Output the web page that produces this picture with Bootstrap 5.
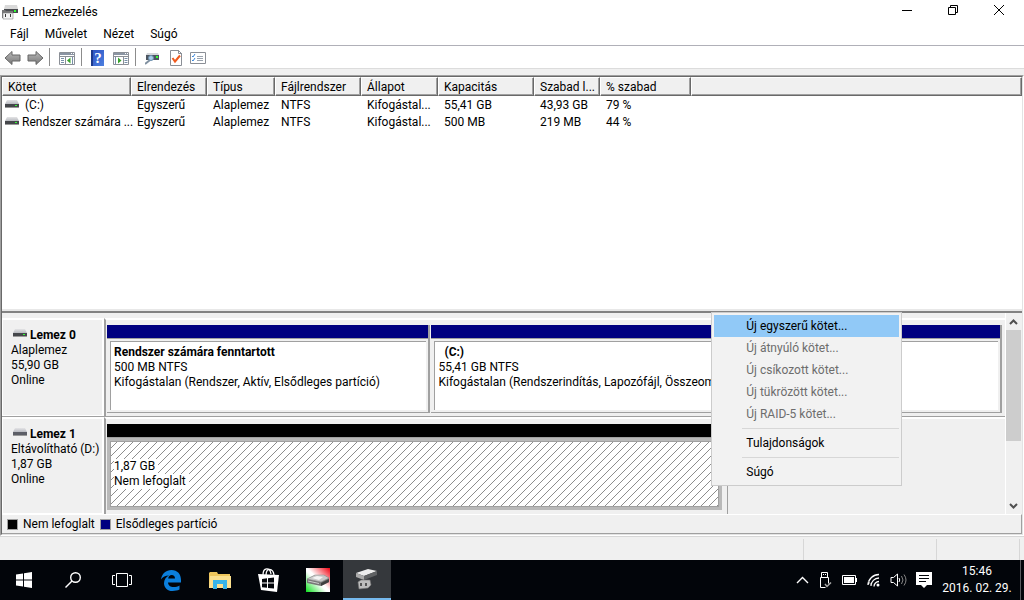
<!DOCTYPE html>
<html lang="hu">
<head>
<meta charset="utf-8">
<meta name="viewport" content="width=device-width, initial-scale=1">
<title>Lemezkezelés</title>
<link href="https://cdn.jsdelivr.net/npm/bootstrap@5.3.0/dist/css/bootstrap.min.css" rel="stylesheet">
<style>
:root{--face:#f0f0f0;--edge:#a0a0a0;--dark:#696969;--navy:#000080}
body{font-family:Roboto,"Open Sans",sans-serif;font-size:12px;line-height:15px;color:#000;background:var(--face);min-height:100vh;overflow:hidden}
button{border:0;background:none;padding:0;color:inherit;font:inherit}
svg{display:block;flex:none}
.titlebar{height:24px;background:#fff;padding:0 2px}
.win-btn{width:46px;height:20px;display:flex;align-items:center;justify-content:center}
.menubar{height:21px;background:#fff;padding-left:2px}
.menubar button{padding:0 8px;height:20px}
.toolstrip{height:24px;background:#fff;border-top:1px solid #b0b0b8;border-bottom:1px solid #dcdcdc;padding-left:4px;gap:5px}
.toolstrip .rule{width:1px;height:18px;background:#8c8c8c}
.toolstrip svg{margin-top:1px}
.workspace{margin-top:6px;border:1px solid var(--edge);border-right-color:#fff;border-bottom-color:#fff;position:relative}
.frame{border:1px solid var(--dark);border-right-color:#e3e3e3;border-bottom-color:#e3e3e3}
.volumes{background:#fff;min-height:160px}
.voltable{table-layout:fixed;width:100%;border-collapse:separate;border-spacing:0}
.voltable th{height:19px;font-weight:400;background:var(--face);border:1px solid;border-color:#fff var(--dark) var(--dark) #fff;padding:0 0 0 5px;line-height:16px;box-shadow:inset -1px -1px var(--edge)}
.voltable td{height:17px;padding:1px 0 0 6px;line-height:16px}
.voltable th,.voltable td{white-space:nowrap}
.voltable td:first-child{padding-left:3px}
.voltable td svg{display:inline-block;vertical-align:1px;margin-right:3px}
.splitter{height:5px;border-top:1px solid #fff;border-bottom:2px solid #828282;background:#e8e8e8}
.disks{height:201px}
.disk-list{padding-top:5px}
.disk-row{height:99px;border-bottom:1px solid var(--edge)}
.disk-row + .disk-row{height:97px;border-bottom:0}
.disk-label{width:102px;border:2px solid #fff;border-left-width:1px;border-bottom-width:1px;padding:8px 0 0 8px;white-space:nowrap;overflow:hidden}
.disk-name{font-weight:700}
.disk-name svg{display:inline-block;vertical-align:2px;margin-left:2px}
.lane{border-left:2px solid var(--edge);border-top:2px solid #fff;padding-top:5px}
.fixed-lane{padding-right:3px}
.strip{height:14px;border-bottom:1px solid var(--edge)}
.strip-primary{background:var(--navy)}
.strip-free{background:#000}
.part{margin-left:1px;border-right:2px solid var(--edge);border-bottom:1px solid var(--edge);height:88px;min-width:0}
.part-body{margin:2px 2px 3px 3px;border-left:1px solid var(--edge);border-top:1px solid var(--edge);background:#fff;padding:3px;height:69px;white-space:nowrap;overflow:hidden}
.part-body p,.free-body p,.disk-label p{margin:0}
.free-part{width:615px;max-width:69%;margin-left:1px}
.free-body{height:72px;border:3px solid #b9b9b9;outline:1px solid var(--edge);outline-offset:-4px;padding:18px 4px;background:#fff url("data:image/svg+xml,%3Csvg xmlns='http://www.w3.org/2000/svg' width='8' height='8'%3E%3Cpath d='M-1 1l2-2M0 8l8-8M7 9l2-2' stroke='%23808080' stroke-width='.9'/%3E%3C/svg%3E")}
.free-body span{background:#fff;padding-right:3px;display:inline-block;height:15px}
.free-edge{border-right:1px solid var(--edge);width:6px;margin-top:-5px}
.scroller{width:17px;background:#f0f0f0;border-left:1px solid #fff}
.scroller button{height:17px;width:15px;display:flex;align-items:center;justify-content:center}
.thumb{height:111px;width:15px;background:#cdcdcd}
.legend-bar{height:20px;border-top:1px solid #fff;border-bottom:1px solid var(--edge);border-right:1px solid var(--edge);padding:1px 0 0 5px;gap:5px}
.swatch{width:11px;height:11px;outline:1px solid var(--edge);outline-offset:-1px}
.popup{position:absolute;top:236px;left:69.5%;width:191px;background:#f2f2f2;border:1px solid #ccc;padding:2px;z-index:5}
.popup button{display:block;width:100%;height:22px;text-align:left;padding-left:32px}
.popup button:disabled{color:#6d6d6d}
.popup .chosen{background:#91c9f7}
.popup hr{margin:3px 0 3px 28px;border-top:1px solid #d7d7d7;opacity:1}
.status{height:24px;border-top:1px solid #d7d7d7}
.status div{border-right:1px solid #d7d7d7;margin-top:2px}
.taskbar{height:40px;background:#02050a;color:#fff}
.task{width:48px;height:40px;display:flex;align-items:center;justify-content:center}
.task.running{background:#35383c;border-bottom:2px solid #76b9ed}
.apps{gap:1px}
.tray{gap:9px;padding-right:2px}
.clock{width:86px;line-height:17px;padding-bottom:1px}
.corner{width:4px;border-left:1px solid #5a5c60}
</style>
</head>
<body class="d-flex flex-column">
<svg width="0" height="0" class="position-absolute" aria-hidden="true">
  <defs>
    <linearGradient id="metal" x2="0" y2="1"><stop stop-color="#e4e4e6"/><stop offset="1" stop-color="#b8bac0"/></linearGradient>
    <linearGradient id="arrowfill" x2="0" y2="1"><stop stop-color="#b9b9b9"/><stop offset="1" stop-color="#777"/></linearGradient>
    <linearGradient id="bluefill" x2="1" y2="1"><stop stop-color="#2a4fc0"/><stop offset="1" stop-color="#4d80e0"/></linearGradient>
    <symbol id="drive" viewBox="0 0 14 8"><path d="M2 0h10l2 4H0z" fill="url(#metal)"/><path d="M0 4h14v3H0z" fill="#45474b"/><path d="M0 7h14v1H0z" fill="#999"/><path d="M10 5h2v1h-2z" fill="#3f3"/></symbol>
    <symbol id="drive-off" viewBox="0 0 14 8"><path d="M2 0h10l2 4H0z" fill="url(#metal)"/><path d="M0 4h14v3H0z" fill="#5c5e66"/><path d="M0 7h14v1H0z" fill="#999"/></symbol>
  </defs>
</svg>
<header class="titlebar d-flex align-items-center">
  <svg width="16" height="16" viewBox="0 0 16 16"><path d="M3 1h12l1 4H2z" fill="#d9d9d9"/><path d="M2 5h14v4H2z" fill="#4a4c50"/><path d="M12 6h2v2h-2z" fill="#3f3"/><path d="M0 6h3l1 1h7v7H0z" fill="#777"/><path d="M1 9h10v6H1z" fill="#f4f4f4" stroke="#888" stroke-width=".6"/><path d="M3 10h1v3H3zM8 10h1v3H8z" fill="#333"/></svg>
  <span class="ms-1">Lemezkezelés</span>
  <div class="ms-auto d-flex align-self-start">
    <button class="win-btn" aria-label="Kis méret"><svg width="12" height="12"><path d="M1 6.500h10" stroke="#000"/></svg></button>
    <button class="win-btn" aria-label="Előző méret"><svg width="12" height="12" fill="none" stroke="#000"><path d="M1.500 3.500h7v7h-7zM3.500 3.500v-2h7v7h-2"/></svg></button>
    <button class="win-btn" aria-label="Bezárás"><svg width="12" height="12"><path d="M1 1l10 10M11 1L1 11" stroke="#000"/></svg></button>
  </div>
</header>
<nav class="menubar d-flex"><button>Fájl</button><button>Művelet</button><button>Nézet</button><button>Súgó</button></nav>
<div class="toolstrip d-flex align-items-center">
  <button aria-label="Vissza"><svg width="18" height="16" viewBox="0 0 18 16"><path d="M1 8l7-6.500v3.500h8v6H8v3.500z" fill="url(#arrowfill)" stroke="#666"/></svg></button>
  <button aria-label="Előre"><svg width="17" height="16" viewBox="1 0 17 16"><path d="M17 8l-7-6.500v3.500H2v6h8v3.500z" fill="url(#arrowfill)" stroke="#666"/></svg></button>
  <span class="rule"></span>
  <button aria-label="Konzolfa" class="ms-1"><svg width="17" height="16" viewBox="0 0 17 16"><path d="M.5 2.500h15v12H.5z" fill="#fff" stroke="#8b8f96"/><path d="M1 3h14v2H1z" fill="#8b95a3"/><path d="M12 3h1v1h-1zM14 3h1v1h-1z" fill="#fff"/><path d="M1 6.500h14M6.500 7v7" stroke="#8b8f96"/><path d="M2 8.500h3M2 10.500h3M2 12.500h3M13.500 7v7" stroke="#7890a8"/><path d="M11.500 7.500v6L8 10.500z" fill="#38a32c"/></svg></button>
  <span class="rule"></span>
  <button aria-label="Súgó" class="ms-1"><svg width="13" height="16" viewBox="0 0 13 16"><path d="M0 0h13v16H0z" fill="url(#bluefill)"/><path d="M0 0h2v16H0z" fill="#1d3a8c"/><text x="7" y="13" font-size="15" font-weight="700" fill="#fff" text-anchor="middle" font-family="Liberation Serif,serif">?</text></svg></button>
  <button aria-label="Műveletek" class="ms-1"><svg width="17" height="16" viewBox="0 0 17 16"><path d="M.5 2.500h15v12H.5z" fill="#fff" stroke="#8b8f96"/><path d="M1 3h14v2H1z" fill="#8b95a3"/><path d="M12 3h1v1h-1zM14 3h1v1h-1z" fill="#fff"/><path d="M1 6.500h14M10.500 7v7" stroke="#8b8f96"/><path d="M2.500 7v7M11.500 8.500h3M11.500 10.500h3M11.500 12.500h3" stroke="#7890a8"/><path d="M5 7.500v6l3.500-3z" fill="#38a32c"/></svg></button>
  <span class="rule"></span>
  <button aria-label="Frissítés" class="ms-1"><svg width="16" height="16" viewBox="1 0 16 16"><path d="M3 3h11l1 2H2z" fill="#d4d7db"/><path d="M2 5h13v5H2z" fill="#4d5560"/><path d="M12 6h2v2h-2z" fill="#3f3"/><path d="M1 14l5-4" stroke="#8090a0" stroke-width="2"/><circle cx="7" cy="8" r="2.500" fill="#a8cdea" stroke="#6a8dab"/></svg></button>
  <button aria-label="Tulajdonságok" class="ms-1"><svg width="13" height="16" viewBox="1 0 13 16"><path d="M1.500.500h8l3 3v12h-11z" fill="#fff" stroke="#8b8f96"/><path d="M9.500 0v3.500h3.500" fill="none" stroke="#8b8f96"/><path d="M3.500 8l2.500 3.500 5-6" fill="none" stroke="#f05a1e" stroke-width="2"/></svg></button>
  <button aria-label="Beállítások"><svg width="18" height="16" viewBox="-2 0 18 16"><path d="M.5 2.500h15v11H.5z" fill="#fff" stroke="#8b8f96"/><path d="M2 6l1 1 2-3M2 10l1 1 2-3" fill="none" stroke="#3b86d8"/><path d="M7 6.500h6M7 8.500h6M7 10.500h6" stroke="#9aa3ae"/></svg></button>
</div>
<main class="workspace flex-grow-1 d-flex flex-column">
  <div class="frame flex-grow-1 d-flex flex-column">
    <div class="volumes flex-grow-1">
      <table class="voltable">
        <colgroup><col style="width:129px"><col style="width:76px"><col style="width:68px"><col style="width:86px"><col style="width:77px"><col style="width:96px"><col style="width:66px"><col style="width:91px"><col></colgroup>
        <thead><tr><th>Kötet</th><th>Elrendezés</th><th>Típus</th><th>Fájlrendszer</th><th>Állapot</th><th>Kapacitás</th><th>Szabad l...</th><th>% szabad</th><th></th></tr></thead>
        <tbody>
          <tr><td><svg width="14" height="8"><use href="#drive"/></svg>&nbsp;(C:)</td><td>Egyszerű</td><td>Alaplemez</td><td>NTFS</td><td>Kifogástal...</td><td>55,41 GB</td><td>43,93 GB</td><td>79 %</td><td></td></tr>
          <tr><td><svg width="14" height="8"><use href="#drive"/></svg>Rendszer számára ...</td><td>Egyszerű</td><td>Alaplemez</td><td>NTFS</td><td>Kifogástal...</td><td>500 MB</td><td>219 MB</td><td>44 %</td><td></td></tr>
        </tbody>
      </table>
    </div>
    <div class="splitter"></div>
    <div class="disks d-flex">
      <div class="disk-list flex-grow-1 overflow-hidden">
        <section class="disk-row d-flex">
          <div class="disk-label flex-shrink-0"><p class="disk-name"><svg width="14" height="8"><use href="#drive"/></svg> Lemez 0</p><p>Alaplemez</p><p>55,90 GB</p><p>Online</p></div>
          <div class="lane fixed-lane flex-grow-1 d-flex">
            <div class="part" style="flex:324 1 0"><div class="strip strip-primary"></div><div class="part-body"><p class="fw-bold">Rendszer számára fenntartott</p><p>500 MB NTFS</p><p>Kifogástalan (Rendszer, Aktív, Elsődleges partíció)</p></div></div>
            <div class="part" style="flex:573 1 0"><div class="strip strip-primary"></div><div class="part-body"><p class="fw-bold">&nbsp; (C:)</p><p>55,41 GB NTFS</p><p>Kifogástalan (Rendszerindítás, Lapozófájl, Összeomlási</p></div></div>
          </div>
        </section>
        <section class="disk-row d-flex">
          <div class="disk-label flex-shrink-0"><p class="disk-name"><svg width="14" height="8"><use href="#drive-off"/></svg> Lemez 1</p><p>Eltávolítható (D:)</p><p>1,87 GB</p><p>Online</p></div>
          <div class="lane flex-grow-1 d-flex">
            <div class="free-part"><div class="strip strip-free"></div><div class="free-body"><p><span>1,87 GB</span></p><p><span>Nem lefoglalt</span></p></div></div>
            <div class="free-edge"></div>
          </div>
        </section>
      </div>
      <div class="scroller d-flex flex-column">
        <button aria-label="Fel"><svg width="9" height="6"><path d="M1 5l3.500-3.500L8 5" fill="none" stroke="#505050" stroke-width="2"/></svg></button>
        <div class="thumb"></div>
        <button class="mt-auto" aria-label="Le"><svg width="9" height="6"><path d="M1 1l3.500 3.500L8 1" fill="none" stroke="#505050" stroke-width="2"/></svg></button>
      </div>
    </div>
    <div class="legend-bar d-flex align-items-center">
      <span class="swatch strip-free"></span><span>Nem lefoglalt</span>
      <span class="swatch strip-primary"></span><span>Elsődleges partíció</span>
    </div>
  </div>
  <div class="popup" role="menu">
    <button class="chosen" role="menuitem">Új egyszerű kötet...</button>
    <button disabled role="menuitem">Új átnyúló kötet...</button>
    <button disabled role="menuitem">Új csíkozott kötet...</button>
    <button disabled role="menuitem">Új tükrözött kötet...</button>
    <button disabled role="menuitem">Új RAID-5 kötet...</button>
    <hr><button role="menuitem">Tulajdonságok</button>
    <hr><button role="menuitem">Súgó</button>
  </div>
</main>
<div class="status d-flex"><div style="width:78.500%"></div><div style="width:13%"></div><div class="flex-grow-1 me-1"></div></div>
<footer class="taskbar d-flex">
  <div class="apps d-flex">
  <button class="task" aria-label="Start"><svg width="16" height="16" fill="#fff"><path d="M0 2.500l7-1V7.500H0zM8 1.300L16 0v7.500H8zM0 8.500h7v6l-7-1zM8 8.500h8V16l-8-1.300z"/></svg></button>
  <button class="task" aria-label="Keresés"><svg width="16" height="16" fill="none" stroke="#fff" stroke-width="1.400"><circle cx="10.500" cy="5.500" r="4.800"/><path d="M7 9l-6.500 6.500"/></svg></button>
  <button class="task" aria-label="Feladatnézet"><svg width="20" height="14" fill="none" stroke="#fff"><path d="M4.500.500h11v13h-11zM3 2.500H.5v9H3M17 2.500h2.500v9H17"/></svg></button>
  <button class="task" aria-label="Edge"><svg width="20" height="21" viewBox="0 0 20 21"><path d="M0 9.500C1 3.500 5 0 10.500 0 16.500 0 20 4.300 20 10v2.500H7c.2 3.200 2.600 4.500 5.500 4.500 2.300 0 4.300-.6 6-1.600v4.200c-2 1-4.200 1.400-7 1.400C6.300 21 3 17.500 3 13.200 3 9.700 5 7 8 5.500 4.500 5.500 1.700 7 0 9.500zM7.200 8.500H14C14 6.300 12.800 5 10.700 5 8.800 5 7.500 6.500 7.200 8.500z" fill="#0b7fdc"/></svg></button>
  <button class="task" aria-label="Fájlkezelő"><svg width="22" height="19" viewBox="0 0 22 19"><path d="M1 1h7l1 2h12v14H0V2z" fill="#eec65c"/><path d="M1 5h21v12H0z" fill="#fbe08e"/><path d="M4 9h14v9h-4v-5H8v5H4z" fill="#35b4e8"/></svg></button>
  <button class="task" aria-label="Áruház"><svg width="22" height="25" viewBox="0 0 22 25"><path d="M5 7c0-8 7-8 8-1M8 7c0-8 7-7 8 0" fill="none" stroke="#fff" stroke-width="1.300"/><path d="M0 6l21 1-2 17-16-2z" fill="#fff"/><path d="M4 11l5-.7v4.300H4zM10 10.200l6-.7v5.100h-6zM4 15.500h5v4.300L4 19.200zM10 15.500h6v5l-6-.6z" fill="#02050a"/></svg></button>
  <button class="task" aria-label="Lemezkép"><svg width="24" height="24"><defs><linearGradient id="rg" x1="1" y1="0" x2="0" y2="1"><stop stop-color="#f00010"/><stop offset=".48" stop-color="#fff"/><stop offset=".55" stop-color="#fff"/><stop offset="1" stop-color="#0be01c"/></linearGradient></defs><path d="M0 0h24v24H0z" fill="url(#rg)"/><path d="M1 11l8-4h9l5 3v4l-8 4-14-3z" fill="#777"/><path d="M1 11l8-4h9l5 3-8 4z" fill="#c9c9c9" stroke="#888" stroke-width=".5"/><path d="M6 10l5-2 6 1-4 3z" fill="#f4f4f4"/><path d="M15 15l8-4v3l-8 4z" fill="#3f3f3f"/><path d="M2 13l11 2.500" stroke="#ccc"/></svg></button>
  <button class="task running" aria-label="Lemezkezelés"><svg width="24" height="22" viewBox="0 0 24 22"><path d="M1 5l12-4 9 2-13 5z" fill="#ededed"/><path d="M1 5l8 3v4l-8-3z" fill="#aaa"/><path d="M9 8l13-5v4L9 12z" fill="#606264"/><path d="M3 14l3-2h9l1 5-3 3-9 1z" fill="#bdbdbd" stroke="#777" stroke-width=".6"/><path d="M6 15v3M11 15v3" stroke="#333" stroke-width="1.500"/></svg></button>
  </div>
  <div class="tray d-flex align-items-center ms-auto">
    <button aria-label="Rejtett ikonok"><svg width="13" height="8"><path d="M1 7l5.500-5.500L12 7" fill="none" stroke="#fff" stroke-width="1.400"/></svg></button>
    <svg width="15" height="17" fill="none" stroke="#fff"><path d="M3.500 5V.5h6V5M5 2.500h1M7 2.500h1M2.500 5.500h8v6M2.500 5.500v10h5"/><path d="M7 12l2 2.500 4-4" stroke="#aaa" stroke-width="1.500"/></svg>
    <svg width="16" height="10"><path d="M.5.500h13v9H.5z" fill="none" stroke="#fff"/><path d="M2 2h10v6H2zM14 3h1v4h-1z" fill="#fff"/></svg>
    <svg width="14" height="14" fill="none"><path d="M1 12A11 11 0 0 1 12 1.500M4 13a8 8 0 0 1 8-8M7 13.500a5 5 0 0 1 5-5" stroke="#fff" stroke-width="1.300"/><path d="M1 8l4 5" stroke="#aaa"/><circle cx="11" cy="12" r="1.500" fill="#fff"/></svg>
    <svg width="17" height="14" fill="none" stroke="#fff"><path d="M1 4.500h2.500l4-3.500v12l-4-3.500H1z"/><path d="M9 5q1.500 2 0 4"/><path d="M11.500 3q3 4 0 8M14 1.500q4 5.500 0 11" stroke="#888"/></svg>
    <svg width="16" height="17"><path d="M0 0h16v13h-5l-3 3-3-3H0z" fill="#fff"/><path d="M3 3.500h10M3 6.500h10M3 9.500h7" stroke="#02050a"/></svg>
  </div>
  <div class="clock text-center d-flex flex-column justify-content-center"><span>15:46</span><span>2016. 02. 29.</span></div>
  <div class="corner"></div>
</footer>
<script src="https://cdn.jsdelivr.net/npm/bootstrap@5.3.0/dist/js/bootstrap.bundle.min.js"></script>
</body>
</html>
